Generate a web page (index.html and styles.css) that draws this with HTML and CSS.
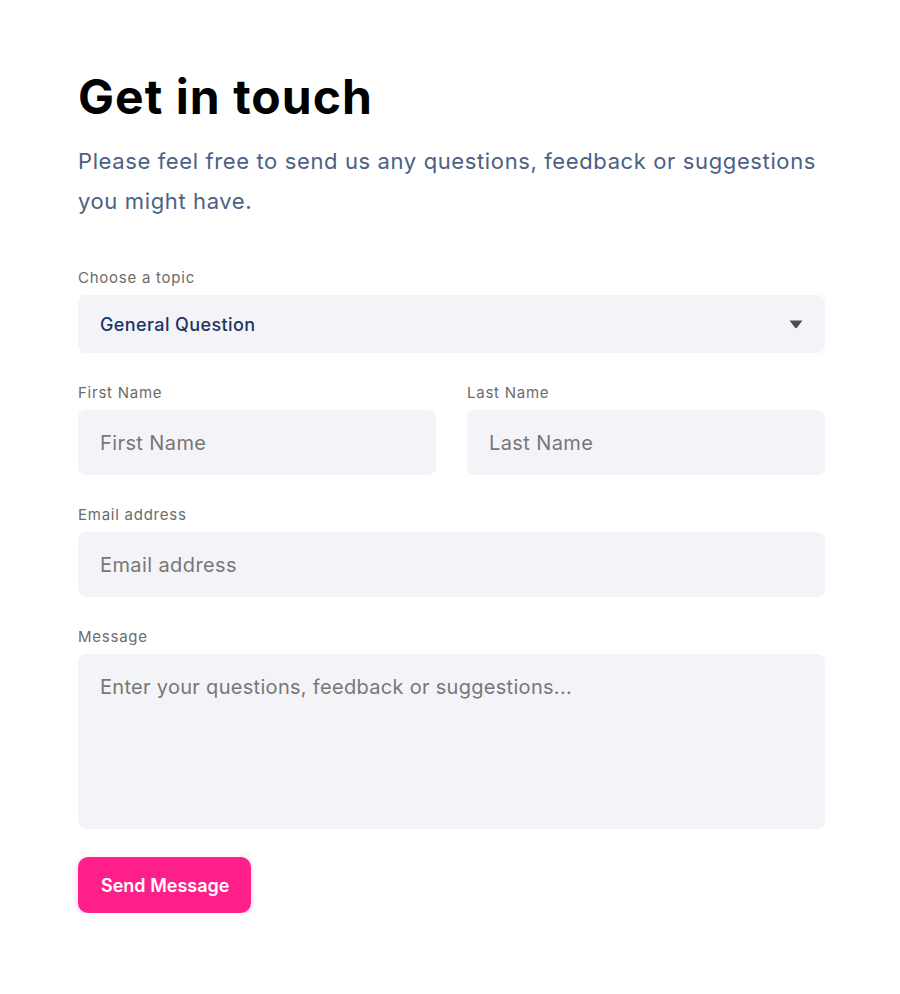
FILE: index.html
```html
<!DOCTYPE html>
<html lang="en">
<head>
<meta charset="utf-8">
<title>Get in touch</title>
<link rel="stylesheet" href="styles.css">
</head>
<body>
<main class="page">
  <h1 class="title">Get in touch</h1>
  <p class="intro">Please feel free to send us any questions, feedback or suggestions you might have.</p>
  <form class="form">
    <div class="field">
      <label class="label" for="topic">Choose a topic</label>
      <div class="select-wrap">
        <select id="topic" class="control select">
          <option>General Question</option>
        </select>
        <svg class="caret" width="14" height="9" viewBox="0 0 14 9"><path d="M0.5 0.5 H13.5 L8.2 7.6 Q7 9 5.8 7.6 Z" fill="#4a4f55"/></svg>
      </div>
    </div>
    <div class="row">
      <div class="field">
        <label class="label" for="first">First Name</label>
        <input id="first" class="control input" type="text" placeholder="First Name">
      </div>
      <div class="field">
        <label class="label" for="last">Last Name</label>
        <input id="last" class="control input" type="text" placeholder="Last Name">
      </div>
    </div>
    <div class="field">
      <label class="label" for="email">Email address</label>
      <input id="email" class="control input" type="email" placeholder="Email address">
    </div>
    <div class="field">
      <label class="label" for="msg">Message</label>
      <textarea id="msg" class="control textarea" placeholder="Enter your questions, feedback or suggestions..."></textarea>
    </div>
    <div class="actions">
      <button type="button" class="button">Send Message</button>
    </div>
  </form>
</main>
</body>
</html>
```

FILE: styles.css
```css
* { box-sizing: border-box; }
html, body { margin: 0; padding: 0; background: #ffffff; }
body {
  font-family: Inter, "Noto Sans", "Liberation Sans", sans-serif;
  color: #000;
}
.page {
  width: 747px;
  margin: 0 0 0 78px;
  padding-top: 68px;
}
.title {
  margin: 0;
  font-size: 48px;
  line-height: 58px;
  font-weight: 700;
  letter-spacing: 1.05px;
  color: #000;
}
.intro {
  margin: 15px 0 0;
  font-size: 22px;
  line-height: 40px;
  letter-spacing: 0.62px;
  color: #4b6183;
}
.form {
  margin-top: 47px;
  display: flex;
  flex-direction: column;
  gap: 30px;
}
.field {
  display: flex;
  flex-direction: column;
  gap: 7px;
  min-width: 0;
}
.label {
  font-size: 15px;
  line-height: 20px;
  letter-spacing: 0.75px;
  color: #6b6b6b;
}
.row {
  display: grid;
  grid-template-columns: 1fr 1fr;
  gap: 31px;
}
.control {
  display: block;
  width: 100%;
  border: 0;
  outline: none;
  background: #f4f4f8;
  border-radius: 8px;
  font-family: inherit;
  margin: 0;
}
.select-wrap { position: relative; }
.select {
  -webkit-appearance: none;
  appearance: none;
  height: 58px;
  padding: 0 22px;
  font-size: 18px;
  font-weight: 500;
  letter-spacing: 0.4px;
  color: #1b3461;
}
.caret {
  position: absolute;
  right: 22px;
  top: 25px;
  pointer-events: none;
}
.input {
  height: 65px;
  padding: 0 22px;
  font-size: 20px;
  letter-spacing: 0.4px;
  color: #222;
}
.textarea {
  height: 175px;
  padding: 19px 22px;
  font-size: 20px;
  line-height: 28px;
  letter-spacing: 0.3px;
  resize: none;
  color: #222;
}
.input::placeholder, .textarea::placeholder { color: #777777; opacity: 1; }
.actions { display: flex; margin-top: -2px; }
.button {
  border: 0;
  background: #ff1f8a;
  color: #fff;
  font-family: inherit;
  font-size: 18px;
  font-weight: 600;
  height: 56px;
  padding: 0 22px 0 23px;
  min-width: 173px;
  border-radius: 10px;
  box-shadow: 0 2px 6px rgba(255, 31, 138, 0.25);
  cursor: pointer;
}
```
